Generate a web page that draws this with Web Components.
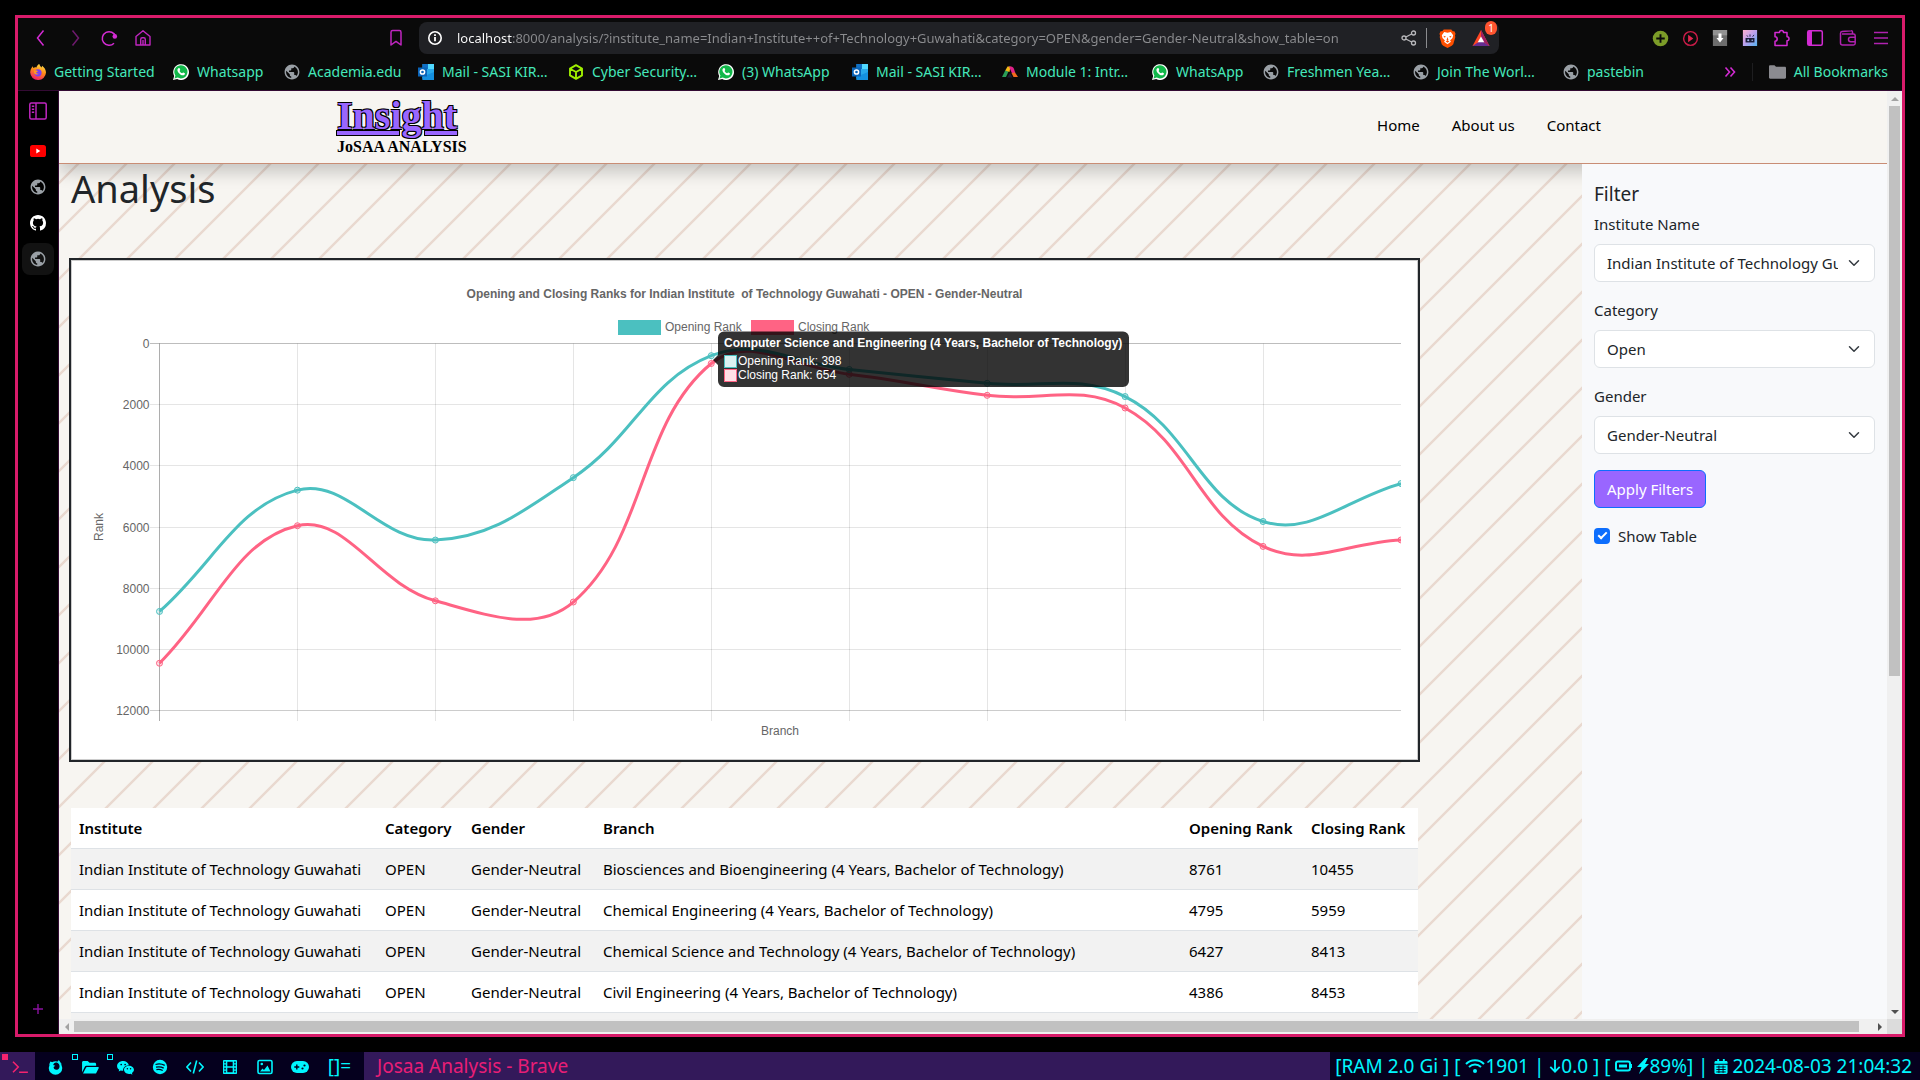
<!DOCTYPE html>
<html lang="en">
<head>
<meta charset="utf-8">
<title>Josaa Analysis - Brave</title>
<style>
  html, body { height: 100%; }
  body { margin: 0; background: #000; font-family: "Noto Sans", "Open Sans", sans-serif; font-size: 15px; line-height: 24px; color: #212529; }
</style>
</head>
<body>
<desk-top></desk-top>
<script>
const ICONS = {
  back: ['0 0 18 18', '<path d="M11.5 1.5 5.500 9l6 7.500" fill="none" stroke="#d32bd3" stroke-width="1.500"/>'],
  forward: ['0 0 18 18', '<path d="M6.500 1.500 12.500 9l-6 7.500" fill="none" stroke="#6e1a6e" stroke-width="1.500"/>'],
  reload: ['0 0 18 18', '<path d="M15.600 7.500A6.800 6.800 0 1 0 14 14.200" fill="none" stroke="#d32bd3" stroke-width="1.500"/><circle cx="14.800" cy="7.400" r="2.300" fill="#d32bd3"/>'],
  home: ['0 0 18 18', '<path d="M2 7.500 9 1.800l7 5.700V16H2zM6.700 16V10.500c0-1 .6-1.700 1.500-1.700h1.600c1 0 1.500.7 1.500 1.700V16M9 11v5" fill="none" stroke="#c026c0" stroke-width="1.400" stroke-linejoin="round"/>'],
  mark: ['0 0 18 18', '<path d="M4 3.200C4 2.200 4.600 1.600 5.600 1.600h6.800c1 0 1.600.6 1.600 1.600V16l-5-3.600L4 16z" fill="none" stroke="#c026c0" stroke-width="1.500" stroke-linejoin="round"/>'],
  info: ['0 0 16 16', '<circle cx="8" cy="8" r="6.200" fill="none" stroke="#fff" stroke-width="1.600"/><path d="M8 7v4.300M8 4.300v1.600" stroke="#fff" stroke-width="1.800"/>'],
  share: ['0 0 16 16', '<g fill="none" stroke="#b9b9bc" stroke-width="1.300"><circle cx="3" cy="8" r="2"/><circle cx="12.500" cy="3" r="2"/><circle cx="12.500" cy="13" r="2"/><path d="M4.800 7 10.700 4M4.800 9l5.900 3"/></g>'],
  lion: ['0 0 18 20', '<path d="M5 .5h8l1.600 1.800 1.700-.1L17.500 5l-.6 2 .4 1.500-2.200 7.500-1.600 1.700L9 20l-4.500-2.300L2.900 16 .7 8.500 1.100 7l-.6-2 1.200-2.800 1.700.1z" fill="#ff5000"/><path d="M9 3.800 12.500 3.200 15 6.500l-.7 3-2.600 2.600 1 1.400L9 16.200l-3.700-2.700 1-1.400-2.600-2.600L3 6.500l2.500-3.300z" fill="#fff"/><path d="M4.500 7.200 7.300 8 6 9.300zM13.500 7.200l-2.800.8 1.300 1.300zM9 8.500l1 3-1 .8-1-.8zM7 13l2-.8 2 .8-2 1.500z" fill="#ff5000"/>'],
  bat: ['0 0 18 18', '<path d="M9 0 0 17h18z" fill="#ff4724"/><path d="M9 0v11l9 6z" fill="#9e1f63"/><path d="M0 17 9 11l9 6z" fill="#662d91"/><path d="M9 7 5.500 13h7z" fill="#fff"/>'],
  plusgreen: ['0 0 18 18', '<circle cx="9" cy="9" r="8.200" fill="#7c9c28"/><path d="M9 4.500v9M4.500 9h9" stroke="#0b0b0b" stroke-width="2"/>'],
  playred: ['0 0 18 18', '<circle cx="9" cy="9" r="7.300" fill="none" stroke="#c91c48" stroke-width="1.500"/><path d="M6.500 5v8l5.500-4z" fill="#e0264f"/>'],
  down: ['0 0 16 18', '<path d="M0 0h16v18H0z" fill="#6d6d6d"/><path d="M0 0h16v6H0z" fill="#929292"/><path d="M6.300 4h3.400v5h2.300L8 14 4 9h2.300z" fill="#fff"/>'],
  photo: ['0 0 16 18', '<defs><linearGradient id="g" x1="0" y1="0" x2="1" y2="1"><stop offset="0" stop-color="#ffb0cf"/><stop offset=".5" stop-color="#b9a0ee"/><stop offset="1" stop-color="#54b4f0"/></linearGradient></defs><path d="M0 0h16v18H0z" fill="url(#g)"/><path d="M3 9h10v5H3z" fill="#1b1d3a"/><circle cx="6" cy="11.500" r="1.200" fill="#a8b8f0"/><circle cx="10.500" cy="11.500" r=".9" fill="#a8b8f0"/><path d="M5.500 7.500 4.500 6M8 7.500V5M11 7.500l1.500-2" stroke="#1b1d3a"/>'],
  puzzle: ['0 0 18 18', '<path d="M2 3.500h4.500a2 2 0 1 1 4 0H14v4.300a2 2 0 1 1 0 4V16.500H2v-4.300a2.200 2.200 0 0 0 0-4.400z" fill="none" stroke="#d32bd3" stroke-width="1.500" stroke-linejoin="round"/>'],
  panel: ['0 0 18 18', '<rect x="1.700" y="1.700" width="14.600" height="14.600" rx="1.500" fill="none" stroke="#d32bd3" stroke-width="1.500"/><path d="M2 2h4v14H2z" fill="#d32bd3"/>'],
  wallet: ['0 0 18 18', '<path d="M13.500 5V3c0-1-.5-1.400-1.300-1.300L3 2.600c-1 .1-1.500.8-1.500 1.800V14c0 1.200.8 2 2 2h11c1 0 1.700-.7 1.700-1.700V6.700C16.200 5.600 15.500 5 14.500 5H3M16 8.300h-4.300a2.200 2.200 0 0 0 0 4.400H16" fill="none" stroke="#b022b0" stroke-width="1.500"/>'],
  menu: ['0 0 18 18', '<path d="M2 3.500h14M2 9h14M2 14.500h14" stroke="#b022b0" stroke-width="1.500"/>'],
  more: ['0 0 12 12', '<path d="M1.500 1.500 5.500 6l-4 4.500M6.500 1.500 10.500 6l-4 4.500" fill="none" stroke="#d32bd3" stroke-width="1.600"/>'],
  folder: ['0 0 17 16', '<path d="M0 2.500C0 1.700.500 1.200 1.200 1.200H5.500L7 2.800h8.800c.7 0 1.200.5 1.200 1.200v9.500c0 .7-.5 1.200-1.200 1.200H1.200C.5 14.700 0 14.200 0 13.500z" fill="#8b8b90"/>'],
  firefox: ['0 0 16 16', '<defs><linearGradient id="f" x1=".7" y1="0" x2=".3" y2="1"><stop offset="0" stop-color="#ffe24a"/><stop offset=".45" stop-color="#ff8a16"/><stop offset="1" stop-color="#f0176f"/></linearGradient></defs><path d="M9.300 0c.3 1.600 1.300 2.500 2.300 3.400l.5-1.600C14.500 3.500 16 6 16 8.600A7.700 7.700 0 0 1 8 16 7.700 7.700 0 0 1 .2 8.600C.2 6.500 1 4 2.800 2.300l.5 1.600C4.500 3 5.500 3 6.500 3.400 6.800 2 7.800.6 9.300 0z" fill="url(#f)"/><circle cx="8" cy="8.800" r="3.600" fill="#7b3ff2"/><path d="M4 6.500c1.500-.6 3-.3 4 .9l-2 1.100c.3 1 1.500 1.500 2.800 1-1 1.700-4.300 1.500-4.800-1z" fill="#ff9a1f"/>'],
  whatsapp: ['0 0 16 16', '<path d="M0 16 1.200 12A7.900 7.900 0 1 1 4.200 15z" fill="#fff"/><path d="M1.500 14.500l.9-3A6.600 6.600 0 1 1 4.700 13.600z" fill="#12b84a"/><path d="M5.400 4.200c.5-.4 1-.3 1.200.1l.6 1.400c.1.400-.5.900-.6 1.200.5 1.200 1.500 2 2.600 2.400.4-.2.800-1 1.200-.8l1.400.8c.3.200.1 1-.3 1.400-1 1-2.600.7-4.200-.3C5.500 9.200 4.300 7.300 4.400 5.800c.1-.6.500-1.300 1-1.600z" fill="#fff"/>'],
  globe: ['1.200 1.200 21.600 21.600', '<path fill="#9aa0a6" d="M12 2C6.480 2 2 6.480 2 12s4.480 10 10 10 10-4.480 10-10S17.520 2 12 2zm-1 17.930c-3.950-.49-7-3.850-7-7.930 0-.62.08-1.210.21-1.790L9 15v1c0 1.100.9 2 2 2v1.930zm6.900-2.540c-.26-.81-1-1.390-1.900-1.390h-1v-3c0-.55-.45-1-1-1H8v-2h2c.55 0 1-.45 1-1V7h2c1.100 0 2-.9 2-2v-.41c2.930 1.190 5 4.060 5 7.410 0 2.080-.8 3.970-2.100 5.390z"/>'],
  outlook: ['0 0 16 16', '<path d="M4.500 0H16v16H4.500z" fill="#28a8ea"/><path d="M4.500 0H10v5H4.500z" fill="#0f6fc4"/><path d="M10 0h6v5h-6z" fill="#50d9ff"/><path d="M4 13 16 8v8H5z" fill="#1490df"/><path d="M0 3.500h9v9H0z" fill="#0a64b8"/><circle cx="4.500" cy="8" r="2.100" fill="none" stroke="#fff" stroke-width="1.500"/>'],
  cube: ['0 0 16 16', '<path d="M8 1.200 14 4.600v6.800L8 14.800 2 11.400V4.600zM2.500 5 8 8l5.500-3M8 8v6.500" fill="none" stroke="#9fef00" stroke-width="1.900" stroke-linejoin="round"/>'],
  arch: ['0 0 16 16', '<path d="M0 13 3.500 6l3 1.500L4 13z" fill="#2a9d57"/><path d="M3.300 6.500 5.500 2.500h3L7.500 8z" fill="#f5b915"/><path d="M7 2.500h2c1.500 0 2.500 1 3 2.500l1.300 4-3.300.5z" fill="#e0218a"/><path d="M9.500 9 13 8.500l3 4.500h-4.500z" fill="#f06a1d"/><path d="M5 13.500 8 9l2.500 4.500z" fill="#1d1d33"/>'],
  tabs: ['0 0 18 18', '<rect x=".8" y="1" width="16.400" height="16" rx="1.500" fill="none" stroke="#c026c0" stroke-width="1.500"/><path d="M7 1v16" stroke="#c026c0" stroke-width="1.400"/><path d="M2.800 4.300h2.400M2.800 7.300h2.400M2.800 10.300h2.400" stroke="#c026c0" stroke-width="1.500"/>'],
  youtube: ['0 0 16 12', '<rect width="16" height="12" rx="2.600" fill="#f00"/><path d="M6.300 3.500v5l4-2.500z" fill="#fff"/>'],
  github: ['0 0 16 16', '<path fill="#fff" d="M8 0C3.580 0 0 3.580 0 8c0 3.540 2.290 6.530 5.470 7.590.4.070.55-.17.55-.38 0-.19-.01-.82-.01-1.490-2.010.37-2.530-.49-2.690-.94-.09-.23-.48-.94-.82-1.130-.28-.15-.68-.52-.01-.53.63-.01 1.080.58 1.230.82.72 1.210 1.870.87 2.330.66.07-.52.28-.87.51-1.070-1.780-.2-3.640-.89-3.640-3.950 0-.87.31-1.590.82-2.150-.08-.2-.36-1.020.08-2.120 0 0 .67-.21 2.200.82a7.600 7.600 0 0 1 4 0c1.530-1.040 2.200-.82 2.200-.82.44 1.100.16 1.920.08 2.120.51.56.82 1.270.82 2.150 0 3.070-1.870 3.750-3.650 3.950.29.25.54.73.54 1.480 0 1.070-.01 1.930-.01 2.200 0 .21.15.46.55.38A8 8 0 0 0 16 8c0-4.420-3.580-8-8-8z"/>'],
  add: ['0 0 12 12', '<path d="M6 1v10M1 6h10" stroke="#8a12a0" stroke-width="1.400"/>'],
  terminal: ['0 0 18 16', '<path d="M1 2l6 6-6 6M8 14h10" fill="none" stroke="#f5236f" stroke-width="1.800"/>'],
  fox: ['0 0 16 16', '<circle cx="8" cy="8.600" r="7.200" fill="#00f6ff"/><path d="M1 5.500 2.500 1.500 5 2.500zM10 2l1.500-2 3.500 5z" fill="#00f6ff"/><path d="M6.300 3.800C8 1.800 10.500 2.600 11.700 4.500c1.300 2.200.6 5.300-2 5.900C7.500 10.800 5.800 9.300 6 7.500L7.800 6.200 5.500 5.400z" fill="#05001e"/>'],
  open: ['0 0 18 16', '<path d="M0 13V2.500C0 1.700.700 1 1.500 1H6l2 2h5.500c.8 0 1.500.7 1.500 1.500V6H4.500c-.6 0-1.100.3-1.400.8zM1 14.500 4.300 8c.2-.3.500-.5.800-.5H17c.600 0 1 .6.700 1.200L15 14c-.2.300-.5.500-.9.500z" fill="#00f6ff"/>'],
  wechat: ['0 0 18 16', '<path d="M6.500 1C2.900 1 0 3.400 0 6.300c0 1.700.9 3.100 2.300 4.100L1.700 12.200 4 11.100c.7.2 1.500.4 2.500.4C6 8.200 8.800 5.600 12.600 5.500 12 2.900 9.500 1 6.500 1z" fill="#00f6ff"/><path d="M18 10.500c0-2.400-2.400-4.400-5.300-4.400S7.400 8.100 7.400 10.500s2.400 4.400 5.300 4.400c.6 0 1.200-.1 1.800-.3l1.800 1-.4-1.700c1.300-.8 2.100-2 2.100-3.400z" fill="#00f6ff"/><g fill="#05001e"><circle cx="4.400" cy="4.800" r=".9"/><circle cx="8.600" cy="4.800" r=".9"/><circle cx="11" cy="9.300" r=".8"/><circle cx="14.400" cy="9.300" r=".8"/></g>'],
  spotify: ['0 0 16 16', '<circle cx="8" cy="8" r="7.200" fill="#00f6ff"/><path d="M3.500 5.500c3-.9 6.500-.6 9.200.9M4 8.200c2.600-.7 5.400-.4 7.700.9M4.400 10.700c2.200-.5 4.400-.2 6.300.8" fill="none" stroke="#05001e" stroke-width="1.300"/>'],
  code: ['0 0 18 16', '<path d="M5 3.500.9 8 5 12.500M13 3.500 17.100 8 13 12.500M10.700 1.500 7.300 14.500" fill="none" stroke="#00f6ff" stroke-width="1.600"/>'],
  film: ['0 0 16 16', '<path fill="#00f6ff" fill-rule="evenodd" d="M2 1h12c.6 0 1 .5 1 1v12c0 .6-.4 1-1 1H2c-.6 0-1-.4-1-1V2c0-.5.400-1 1-1zM2.300 2.500v1.700h1.500V2.500zm0 3.100v1.700h1.500V5.600zm0 3.100v1.700h1.500V8.700zm0 3.100v1.700h1.500v-1.700zM12.200 2.500v1.700h1.500V2.500zm0 3.100v1.700h1.500V5.600zm0 3.100v1.700h1.500V8.700zm0 3.100v1.700h1.500v-1.700zM5.300 2.800v4.400h5.400V2.800zm0 6v4.400h5.400V8.800z"/>'],
  image: ['0 0 16 16', '<rect x="1" y="1.500" width="14" height="13" rx="1.500" fill="none" stroke="#00f6ff" stroke-width="1.600"/><path d="M3 12.500 5.500 9.500l1.500 1.500L10.500 6.500 13.500 12.500z" fill="#00f6ff"/><circle cx="4.800" cy="5" r="1.300" fill="#00f6ff"/>'],
  pad: ['0 0 18 14', '<path d="M6 1h6a6 6 0 0 1 0 12H6A6 6 0 0 1 6 1z" fill="#00f6ff"/><path d="M5.800 4.500v5M3.300 7h5" stroke="#05001e" stroke-width="1.400"/><circle cx="13.500" cy="5.500" r="1.100" fill="#05001e"/><circle cx="11.500" cy="8.500" r="1.100" fill="#05001e"/>'],
  wifi: ['0 0 20 16', '<path d="M1 6c5-5 13-5 18 0M4 9c3.500-3.300 8.500-3.300 12 0" fill="none" stroke="#00f6ff" stroke-width="2"/><circle cx="10" cy="13" r="2" fill="#00f6ff"/>'],
  arrow: ['0 0 12 16', '<path d="M6 1v12.500M1 8.500l5 5 5-5" fill="none" stroke="#00f6ff" stroke-width="1.900"/>'],
  battery: ['0 0 17 12', '<rect x="1" y="1.500" width="14" height="9" rx="2" fill="none" stroke="#00f6ff" stroke-width="2"/><path d="M4 4.500h8v3H4zM15.500 4h1.500v4h-1.500z" fill="#00f6ff"/>'],
  bolt: ['0 0 12 16', '<path d="M8.500 0 0 9h4.500L2 16l10-10H8L11 0z" fill="#00f6ff"/>'],
  calendar: ['0 0 14 16', '<path d="M0 3.500C0 2.700.700 2 1.500 2H3V0h2v2h4V0h2v2h1.500c.8 0 1.500.7 1.500 1.500V5H0zM0 6h14v8.500c0 .8-.7 1.500-1.500 1.500h-11C.7 16 0 15.300 0 14.500z" fill="#00f6ff"/><path d="M2 8.500h10M2 11.200h10M2 13.800h10M4.800 7v8M9.200 7v8" stroke="#05001e" stroke-width="1"/>'],
  chevron: ['0 0 16 16', '<path fill="none" stroke="#343a40" stroke-linecap="round" stroke-linejoin="round" stroke-width="2" d="m2 5 6 6 6-6"/>']
};

function define(name, html, setup) {
  const template = document.createElement('template');
  template.innerHTML = html;
  customElements.define(name, class extends HTMLElement {
    constructor() {
      super();
      this.attachShadow({ mode: 'open' }).append(template.content.cloneNode(true));
    }
    connectedCallback() { if (setup) setup(this, this.shadowRoot); }
  });
}

/* <ui-icon name w h>: one drawing from the table above */
define('ui-icon', `<style>:host{display:block;flex:none} svg{display:block}</style>`, (el, root) => {
  const [box, art] = ICONS[el.getAttribute('name')];
  const w = el.getAttribute('w') || 16, h = el.getAttribute('h') || w;
  root.innerHTML += `<svg width="${w}" height="${h}" viewBox="${box}" aria-hidden="true">${art}</svg>`;
});

define('tool-bar', `<style>
  :host{display:flex;align-items:center;height:36px;padding:4px 5px 0 6px;box-sizing:border-box;background:#0a0a0a}
  button{display:grid;place-items:center;width:34px;height:32px;padding:0;border:0;background:none}
  .left{flex:3} .right{flex:2}
  .ext,.end,.nav{display:flex}
  .ext button{width:30px} .end button{width:33px}
  .url{display:flex;align-items:center;width:1080px;height:32px;box-sizing:border-box;margin-left:6px;padding:0 1px 0 8px;border-radius:8px;background:#202125}
  input{flex:1;min-width:0;margin:0 0 0 14px;padding:0;border:0;outline:0;height:24px;font:13px/24px "Noto Sans",sans-serif;
    color:#8b8c8f;-webkit-text-fill-color:transparent;background:linear-gradient(90deg,#fff 55px,#8b8c8f 55px);-webkit-background-clip:text;background-clip:text}
  .rule{width:1px;height:20px;background:#8b8c8f;margin:0 3px 0 0}
  .bat{position:relative}
  .badge{position:absolute;right:1px;top:-1px;width:12px;height:14px;border-radius:6px;background:#ff5530;color:#fff;font:10px/14px "Noto Sans",sans-serif;text-align:center}
</style>
<div class="nav">
  <button aria-label="Back"><ui-icon name="back" w="18"></ui-icon></button>
  <button aria-label="Forward"><ui-icon name="forward" w="18"></ui-icon></button>
  <button aria-label="Reload"><ui-icon name="reload" w="18"></ui-icon></button>
  <button aria-label="Home"><ui-icon name="home" w="18"></ui-icon></button>
</div>
<div class="left"></div>
<button aria-label="Bookmark this page"><ui-icon name="mark" w="18"></ui-icon></button>
<div class="url">
  <ui-icon name="info" w="16"></ui-icon>
  <input aria-label="Address" value="localhost:8000/analysis/?institute_name=Indian+Institute++of+Technology+Guwahati&amp;category=OPEN&amp;gender=Gender-Neutral&amp;show_table=on">
  <button aria-label="Share"><ui-icon name="share" w="16"></ui-icon></button>
  <span class="rule"></span>
  <button aria-label="Shields"><ui-icon name="lion" w="17" h="19"></ui-icon></button>
  <button class="bat" aria-label="Rewards"><ui-icon name="bat" w="18" h="17"></ui-icon><span class="badge">1</span></button>
</div>
<div class="right"></div>
<div class="ext">
  <button aria-label="Add"><ui-icon name="plusgreen" w="17"></ui-icon></button>
  <button aria-label="Play"><ui-icon name="playred" w="17"></ui-icon></button>
  <button aria-label="Download"><ui-icon name="down" w="16"></ui-icon></button>
  <button aria-label="Screenshot"><ui-icon name="photo" w="16"></ui-icon></button>
</div>
<div class="end">
  <button aria-label="Extensions"><ui-icon name="puzzle" w="18"></ui-icon></button>
  <button aria-label="Side panel"><ui-icon name="panel" w="18"></ui-icon></button>
  <button aria-label="Wallet"><ui-icon name="wallet" w="18"></ui-icon></button>
  <button aria-label="Menu"><ui-icon name="menu" w="18"></ui-icon></button>
</div>`);

define('book-mark', `<style>
  :host{display:block;flex:none;font-size:14px;line-height:20px}
  a{display:flex;align-items:center;gap:8px;color:#45e8bb;text-decoration:none;white-space:nowrap}
</style><a href="#"><span></span><slot></slot></a>`, (el, root) => {
  const icon = el.getAttribute('icon');
  root.querySelector('span').innerHTML = `<ui-icon name="${icon}" w="${icon === 'folder' ? 17 : 16}" h="16"></ui-icon>`;
});

define('bookmark-bar', `<style>
  :host{display:flex;align-items:center;gap:16px;height:36px;padding:0 14px 0 12px;box-sizing:border-box;background:#0a0a0a}
  .short{width:95px} .mid{width:118px} .name{width:127px} .long{width:134px}
  .grow{flex:1} .rule{width:1px;height:18px;background:#1e1e20}
</style>
<book-mark class="name" icon="firefox">Getting Started</book-mark>
<book-mark class="short" icon="whatsapp">Whatsapp</book-mark>
<book-mark class="mid" icon="globe">Academia.edu</book-mark>
<book-mark class="long" icon="outlook">Mail - SASI KIR…</book-mark>
<book-mark class="long" icon="cube">Cyber Security…</book-mark>
<book-mark class="mid" icon="whatsapp">(3) WhatsApp</book-mark>
<book-mark class="long" icon="outlook">Mail - SASI KIR…</book-mark>
<book-mark class="long" icon="arch">Module 1: Intr…</book-mark>
<book-mark class="short" icon="whatsapp">WhatsApp</book-mark>
<book-mark class="long" icon="globe">Freshmen Yea…</book-mark>
<book-mark class="long" icon="globe">Join The Worl…</book-mark>
<book-mark icon="globe">pastebin</book-mark>
<div class="grow"></div>
<ui-icon name="more" w="12"></ui-icon>
<span class="rule"></span>
<book-mark icon="folder">All Bookmarks</book-mark>`);

define('side-rail', `<style>
  :host{display:flex;flex-direction:column;align-items:center;width:41px;box-sizing:border-box;padding:4px 0 9px;background:#000;border-right:1px solid #330a33}
  button{display:grid;place-items:center;width:32px;height:32px;margin-bottom:4px;padding:0;border:0;border-radius:8px;background:none}
  button.first{margin-bottom:8px} button.on{background:#121212}
  .grow{flex:1} button:last-child{margin:0}
</style>
<button class="first" aria-label="Tabs"><ui-icon name="tabs" w="18"></ui-icon></button>
<button aria-label="YouTube"><ui-icon name="youtube" w="16" h="12"></ui-icon></button>
<button aria-label="Site"><ui-icon name="globe" w="16"></ui-icon></button>
<button aria-label="GitHub"><ui-icon name="github" w="16"></ui-icon></button>
<button class="on" aria-label="Current site"><ui-icon name="globe" w="16"></ui-icon></button>
<div class="grow"></div>
<button aria-label="New tab"><ui-icon name="add" w="12"></ui-icon></button>`);

define('site-header', `<style>
  :host{display:flex;justify-content:space-between;align-items:center;height:73px;box-sizing:border-box;padding:0 286px 4px 278px;
    background:#f7f5f1;border-bottom:1px solid #c98d75;box-shadow:0 8px 16px rgba(0,0,0,.2);position:relative;z-index:1}
  .brand{font-family:"Liberation Serif",serif;font-weight:bold;color:#000}
  .brand a{display:block;font-size:40px;line-height:44px;color:#96f;text-decoration:underline;
    text-shadow:-1px -1px 0 #000,1px -1px 0 #000,-1px 1px 0 #000,1px 1px 0 #000}
  .brand span{display:block;font-size:16px;line-height:18px}
  nav{display:flex;gap:32px} nav a{color:#000;text-decoration:none}
</style>
<div class="brand"><a href="#">Insight</a><span>JoSAA ANALYSIS</span></div>
<nav><a href="#">Home</a><a href="#">About us</a><a href="#">Contact</a></nav>`);

define('rank-chart', `<style>
  :host{display:block;border:2px solid #212529;background:#fff}
  svg{display:block;width:100%;height:auto;box-sizing:border-box;border:1px solid #ccc;font:12px "Liberation Sans",Arial,sans-serif}
  text{white-space:pre}
</style><svg viewBox="0 0 1345 498" role="img" aria-label="Opening and closing ranks"></svg>`, (el, root) => {
  const L = 87.5, R = 1329, T = 82.5, B = 449.5, MAX = 12000;
  const series = [
    { color: '#ff6384', soft: 'rgba(255,99,132,.2)', data: [10455, 5959, 8413, 8453, 654, 1007, 1695, 2110, 6635, 6424] },
    { color: '#4bc0c0', soft: 'rgba(75,192,192,.2)', data: [8761, 4795, 6427, 4386, 398, 850, 1302, 1735, 5820, 4580] }
  ];
  const X = i => L + (R - L) * i / 9, Y = v => T + (B - T) * v / MAX;
  let s = '<defs><clipPath id="area"><rect x="80" y="70" width="1249" height="400"/></clipPath></defs>';
  for (let v = 0; v <= MAX; v += 2000) {
    const y = Math.floor(Y(v)) + .5, edge = v === 0 ? .26 : v === MAX ? .2 : .1;
    s += `<path d="M78 ${y}H${R}" stroke="#000" stroke-opacity="${edge}"/><text x="77.500" y="${y + 4}" text-anchor="end" fill="#666">${v}</text>`;
  }
  for (let i = 0; i < 9; i++) {
    const x = Math.floor(X(i)) + .5;
    s += `<path d="M${x} ${T}V460" stroke="#000" stroke-opacity="${i ? .1 : .32}"/>`;
  }
  /* Cubic spline through the points, tension 0.4 */
  for (const { color, soft, data } of series) {
    const p = data.map((v, i) => [X(i), Y(v)]);
    const ctl = p.map((c, i) => {
      const a = p[i - 1] || c, b = p[i + 1] || c;
      const d1 = Math.hypot(c[0] - a[0], c[1] - a[1]), d2 = Math.hypot(b[0] - c[0], b[1] - c[1]);
      const fa = .4 * d1 / (d1 + d2), fb = .4 * d2 / (d1 + d2);
      return { in: [c[0] - fa * (b[0] - a[0]), c[1] - fa * (b[1] - a[1])], out: [c[0] + fb * (b[0] - a[0]), c[1] + fb * (b[1] - a[1])] };
    });
    let d = `M${p[0]}`;
    for (let i = 1; i < p.length; i++) d += `C${ctl[i - 1].out} ${ctl[i].in} ${p[i]}`;
    s += `<g clip-path="url(#area)" stroke="${color}"><path d="${d}" fill="none" stroke-width="3"/>` +
      p.map(q => `<circle cx="${q[0]}" cy="${q[1]}" r="3" fill="${soft}"/>`).join('') + '</g>';
  }
  s += `<g fill="#666">
    <text x="672.500" y="37" text-anchor="middle" font-weight="bold">Opening and Closing Ranks for Indian Institute  of Technology Guwahati - OPEN - Gender-Neutral</text>
    <text x="593" y="70">Opening Rank</text><text x="726" y="70">Closing Rank</text>
    <text x="708" y="474" text-anchor="middle">Branch</text>
    <text transform="translate(31 266) rotate(-90)" text-anchor="middle">Rank</text></g>
    <rect x="546" y="59" width="43" height="15" fill="#4bc0c0"/><rect x="679" y="59" width="43" height="15" fill="#ff6384"/>
    <path d="M652 70.500H1051a6 6 0 0 1 6 6V120a6 6 0 0 1-6 6H652a6 6 0 0 1-6-6V104L641 99 646 94V76.500a6 6 0 0 1 6-6z" fill="#000" fill-opacity=".8"/>
    <g fill="#fff"><text x="652" y="86" font-weight="bold">Computer Science and Engineering (4 Years, Bachelor of Technology)</text>
    <text x="666" y="104">Opening Rank: 398</text><text x="666" y="118">Closing Rank: 654</text>
    <path d="M652 94h13v13h-13zM652 108h13v13h-13z"/></g>
    <rect x="652.500" y="94.500" width="12" height="12" fill="rgba(75,192,192,.2)" stroke="#4bc0c0"/>
    <rect x="652.500" y="108.500" width="12" height="12" fill="rgba(255,99,132,.2)" stroke="#ff6384"/>`;
  root.querySelector('svg').innerHTML = s;
});

define('rank-table', `<style>
  :host{display:block}
  table{width:100%;table-layout:fixed;border-collapse:collapse;background:#fff;color:#000}
  th,td{padding:8px;height:24px;text-align:left;white-space:nowrap;border-bottom:1px solid #dee2e6;font-weight:400}
  th{font-weight:600}
  tbody tr:nth-child(odd){background:#f2f2f2}
</style><table><colgroup><col style="width:306px"><col style="width:86px"><col style="width:132px"><col><col style="width:122px"><col style="width:115px"></colgroup>
<thead><tr><th>Institute</th><th>Category</th><th>Gender</th><th>Branch</th><th>Opening Rank</th><th>Closing Rank</th></tr></thead><tbody></tbody></table>`, (el, root) => {
  root.querySelector('tbody').innerHTML = [
    ['Biosciences and Bioengineering', 8761, 10455],
    ['Chemical Engineering', 4795, 5959],
    ['Chemical Science and Technology', 6427, 8413],
    ['Civil Engineering', 4386, 8453]
  ].map(([b, o, c]) => `<tr><td>Indian Institute of Technology Guwahati</td><td>OPEN</td><td>Gender-Neutral</td><td>${b} (4 Years, Bachelor of Technology)</td><td>${o}</td><td>${c}</td></tr>`).join('') + '<tr><td colspan="6"></td></tr>';
});

define('filter-field', `<style>
  :host{display:block;margin-bottom:16px}
  label{display:block;margin-bottom:8px}
  .box{display:grid;align-items:center}
  select,ui-icon{grid-area:1/1}
  select{appearance:none;width:100%;min-width:0;height:38px;box-sizing:border-box;padding:0 36px 0 12px;border:1px solid #dee2e6;border-radius:6px;background:#fff;color:#212529;font:inherit}
  ui-icon{justify-self:end;margin-right:13px;pointer-events:none}
</style><label for="s"></label><div class="box"><select id="s"><option></option></select><ui-icon name="chevron" w="16" h="12"></ui-icon></div>`, (el, root) => {
  root.querySelector('label').textContent = el.getAttribute('label');
  root.querySelector('option').textContent = el.getAttribute('value');
});

define('filter-panel', `<style>
  :host{display:block;width:305px;box-sizing:border-box;padding:18px 12px;background:#f8f9fb;position:relative;z-index:2}
  h2{margin:0 0 6px;font-size:19px;line-height:24px;font-weight:400}
  button{height:38px;padding:0 12px;border:1px solid #0d6efd;border-radius:6px;background:#96f;color:#fff;font:inherit}
  .check{display:flex;align-items:center;gap:8px;margin-top:16px}
  input{appearance:none;width:16px;height:16px;margin:0;border-radius:4px;background:#0d6efd;display:grid;place-items:center}
  input:checked::before{content:"";width:7px;height:3px;border:solid #fff;border-width:0 0 2px 2px;transform:rotate(-45deg);margin-bottom:3px}
</style>
<h2>Filter</h2>
<filter-field label="Institute Name" value="Indian Institute of Technology Guwahati"></filter-field>
<filter-field label="Category" value="Open"></filter-field>
<filter-field label="Gender" value="Gender-Neutral"></filter-field>
<button type="submit">Apply Filters</button>
<div class="check"><input type="checkbox" id="t" checked><label for="t">Show Table</label></div>`);

define('analysis-page', `<style>
  :host{display:flex;flex-direction:column;min-height:0;min-width:0;overflow:hidden;background:#f7f5f1}
  .body{display:flex;flex:1;min-height:0}
  main{flex:1;min-width:0;padding:0 162px 0 10px;
    background:linear-gradient(135deg,#e9d9d0 0 1.500%,transparent 2.300% 47.700%,#e9d9d0 48.500% 51.500%,transparent 52.300% 97.700%,#e9d9d0 98.500%) 19px 0/48px 48px}
  h1{margin:0 2px 46px;font-size:38px;line-height:48px;font-weight:400}
  rank-table{margin:46px 2px 0}
</style>
<site-header></site-header>
<div class="body"><main><h1>Analysis</h1><rank-chart></rank-chart><rank-table></rank-table></main><filter-panel></filter-panel></div>`);

define('scroll-bar', `<style>
  :host{display:flex;align-items:center;background:#f0f0f0}
  :host([dir-y]){flex-direction:column}
  .end{flex:none;width:15px;height:15px;display:grid;place-items:center}
  .track{flex:1;align-self:stretch;display:flex;padding:2px 0} :host([dir-y]) .track{flex-direction:column;padding:0 2px}
  .thumb{background:#c1c1c1;flex:0 0 var(--size)}
  svg{display:block}
</style><span class="end"><svg width="8" height="8"><path class="a"/></svg></span><div class="track"><div class="thumb"></div></div><span class="end"><svg width="8" height="8"><path class="b"/></svg></span>`, (el, root) => {
  const y = el.hasAttribute('dir-y'), a = root.querySelector('.a'), b = root.querySelector('.b');
  a.setAttribute('d', y ? 'M0 6 4 2 8 6z' : 'M6 0 2 4 6 8z');
  b.setAttribute('d', y ? 'M0 2 4 6 8 2z' : 'M2 0 6 4 2 8z');
  a.setAttribute('fill', '#a3a3a3'); b.setAttribute('fill', '#505050');
});

define('browser-window', `<style>
  :host{display:flex;flex-direction:column;min-height:0;border:3px solid #d81b6a;background:#0a0a0a}
  .content{display:grid;grid-template:minmax(0,1fr) 15px/auto minmax(0,1fr) 15px;flex:1;min-height:0;border-top:1px solid #330a33}
  side-rail{grid-row:1/3}
  .corner{background:#dcdcdc}
</style><tool-bar></tool-bar><bookmark-bar></bookmark-bar>
<div class="content"><side-rail></side-rail><analysis-page></analysis-page>
<scroll-bar dir-y style="--size:63.500%"></scroll-bar><scroll-bar style="--size:99.300%"></scroll-bar><div class="corner"></div></div>`);

define('status-bar', `<style>
  :host{display:flex;align-items:center;height:28px;background:#05001e;color:#00f6ff;font-size:19px;line-height:28px;white-space:pre}
  .tag{position:relative;display:grid;place-items:center;width:35px;height:28px;padding:2px 0 0 5px;box-sizing:border-box;border:0;background:none}
  .tag.on{background:#33195a}
  .tag i{position:absolute;left:2px;top:2px;width:6px;height:6px;box-sizing:border-box;border:1px solid #00f6ff}
  .tag.on i{background:#f5236f;border:0}
  .layout{width:49px;text-align:center;box-sizing:border-box}
  .title{flex:1;align-self:stretch;padding-left:13px;background:#33195a;color:#e91e76}
  .stats{display:flex;align-items:center;padding:0 8px 0 5px}
</style>
<button class="tag on" aria-label="Terminal"><i></i><ui-icon name="terminal" w="18" h="14"></ui-icon></button>
<button class="tag" aria-label="Web"><ui-icon name="fox" w="15"></ui-icon></button>
<button class="tag" aria-label="Files"><i></i><ui-icon name="open" w="17" h="15"></ui-icon></button>
<button class="tag" aria-label="Chat"><i></i><ui-icon name="wechat" w="17" h="15"></ui-icon></button>
<button class="tag" aria-label="Music"><ui-icon name="spotify" w="16"></ui-icon></button>
<button class="tag" aria-label="Code"><ui-icon name="code" w="18" h="16"></ui-icon></button>
<button class="tag" aria-label="Video"><ui-icon name="film" w="16"></ui-icon></button>
<button class="tag" aria-label="Pictures"><ui-icon name="image" w="16"></ui-icon></button>
<button class="tag" aria-label="Games"><ui-icon name="pad" w="18" h="14"></ui-icon></button>
<span class="layout">[]=</span>
<span class="title">Josaa Analysis - Brave</span>
<div class="stats"><span>[RAM 2.0 Gi ] [ </span><ui-icon name="wifi" w="20" h="16"></ui-icon><span>1901 | </span><ui-icon name="arrow" w="12" h="15"></ui-icon><span>0.0 ] [ </span><ui-icon name="battery" w="17" h="12"></ui-icon><span> </span><ui-icon name="bolt" w="12" h="16"></ui-icon><span>89%] | </span><ui-icon name="calendar" w="14" h="15"></ui-icon><span> 2024-08-03 21:04:32</span></div>`);

define('desk-top', `<style>
  :host{display:flex;flex-direction:column;height:100vh;background:#000}
  browser-window{flex:1;margin:15px}
</style><browser-window></browser-window><status-bar></status-bar>`);
</script>
</body>
</html>
